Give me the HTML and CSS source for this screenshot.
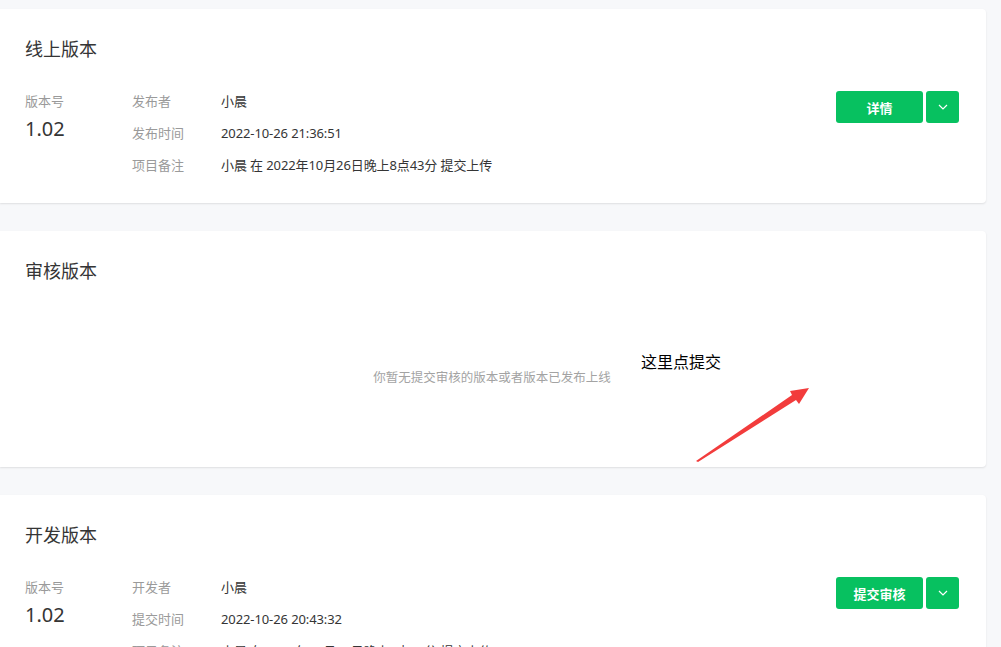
FILE: index.html
```html
<!DOCTYPE html>
<html>
<head>
  <meta charset="utf-8">
  <title>版本管理</title>
  <link rel="stylesheet" href="styles.css">
</head>
<body>
  <div class="page">
    <div class="card">
      <h2 class="card-title">线上版本</h2>
      <div class="version">
        <div class="version-num">
          <div class="label">版本号</div>
          <div class="num">1.02</div>
        </div>
        <div class="info">
          <div class="row"><span class="key">发布者</span><span class="val">小晨</span></div>
          <div class="row"><span class="key">发布时间</span><span class="val">2022-10-26 21:36:51</span></div>
          <div class="row"><span class="key">项目备注</span><span class="val">小晨 在 2022年10月26日晚上8点43分 提交上传</span></div>
        </div>
        <div class="actions">
          <button class="btn">详情</button>
          <button class="btn btn-drop"><svg width="10" height="6" viewBox="0 0 10 6"><path d="M1 1l4 4 4-4" fill="none" stroke="#fff" stroke-width="1.2"/></svg></button>
        </div>
      </div>
    </div>

    <div class="card card-audit">
      <h2 class="card-title">审核版本</h2>
      <div class="empty">你暂无提交审核的版本或者版本已发布上线</div>
      <div class="note">这里点提交</div>
      <svg class="arrow" width="1001" height="240" viewBox="0 0 1001 240">
        <polygon points="696,230 792,164 790,160 809,157 799,173 796,169 698,231" fill="#f23c3c"/>
      </svg>
    </div>

    <div class="card">
      <h2 class="card-title">开发版本</h2>
      <div class="version">
        <div class="version-num">
          <div class="label">版本号</div>
          <div class="num">1.02</div>
        </div>
        <div class="info">
          <div class="row"><span class="key">开发者</span><span class="val">小晨</span></div>
          <div class="row"><span class="key">提交时间</span><span class="val">2022-10-26 20:43:32</span></div>
          <div class="row"><span class="key">项目备注</span><span class="val">小晨 在 2022年10月26日晚上8点43分 提交上传</span></div>
        </div>
        <div class="actions">
          <button class="btn">提交审核</button>
          <button class="btn btn-drop"><svg width="10" height="6" viewBox="0 0 10 6"><path d="M1 1l4 4 4-4" fill="none" stroke="#fff" stroke-width="1.2"/></svg></button>
        </div>
      </div>
    </div>
  </div>
</body>
</html>
```

FILE: styles.css
```css
/* version list page */
body {
  margin: 0;
  background-color: #f7f8fa;
  font-family: "Noto Sans", "Noto Sans CJK SC", sans-serif;
  color: #353535;
  overflow: hidden;
}
.page {
  padding: 9px 15px 0 0;
  display: flex;
  flex-direction: column;
  gap: 28px;
}
.card {
  position: relative;
  background-color: #fff;
  border-radius: 0 4px 4px 0;
  box-shadow: 0 1px 2px rgba(0, 0, 0, 0.1);
  padding: 27px 27px 28px 25px;
}
.card-title {
  margin: 0;
  font-size: 18px;
  font-weight: normal;
  line-height: 26px;
  color: #353535;
}
.version {
  display: flex;
  margin-top: 29px;
}
.version-num {
  width: 107px;
}
.label {
  font-size: 13px;
  line-height: 20px;
  color: #9a9a9a;
}
.num {
  font-size: 20px;
  line-height: 28px;
  margin-top: 4px;
  color: #353535;
}
.info {
  flex: 1;
  display: flex;
  flex-direction: column;
  gap: 12px;
}
.row {
  display: flex;
  font-size: 13px;
  line-height: 20px;
}
.key {
  width: 89px;
  color: #9a9a9a;
}
.val {
  color: #353535;
  letter-spacing: -0.1px;
}
.actions {
  display: flex;
  gap: 3px;
  align-items: flex-start;
}
.btn {
  height: 32px;
  width: 87px;
  border: none;
  border-radius: 3px;
  background-color: #07c160;
  color: #fff;
  font-family: inherit;
  font-size: 13px;
  font-weight: bold;
  padding: 0;
  display: flex;
  align-items: center;
  justify-content: center;
}
.btn-drop {
  width: 33px;
}
.card-audit {
  padding-bottom: 28px;
}
.empty {
  margin: 29px -27px 0 -25px;
  height: 126px;
  display: flex;
  align-items: center;
  justify-content: center;
  font-size: 12.5px;
  color: #a3a3a3;
  padding: 0 27px 0 25px;
}
.note {
  position: absolute;
  left: 641px;
  top: 120px;
  font-size: 16px;
  line-height: 22px;
  color: #000;
}
.arrow {
  position: absolute;
  left: 0;
  top: 0;
}
```
